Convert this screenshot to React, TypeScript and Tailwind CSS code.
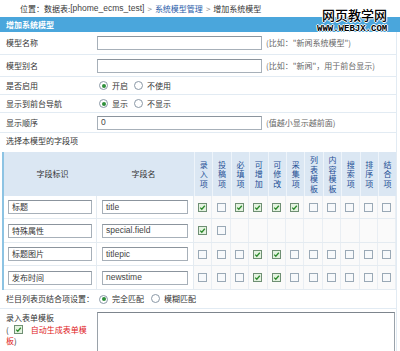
import React from "react";

const cols = ["录入项", "投稿项", "必填项", "可增加", "可修改", "采集项", "列表模板", "内容模板", "搜索项", "排序项", "结合项"];

const rows = [
  { label: "标题", name: "title", checks: [1, 0, 1, 1, 1, 1, 0, 0, 0, 0, 0], h: "h-[23px]" },
  { label: "特殊属性", name: "special.field", checks: [1, 0], h: "h-[24px]" },
  { label: "标题图片", name: "titlepic", checks: [0, 0, 0, 1, 1, 0, 0, 0, 0, 0, 0], h: "h-[23px]" },
  { label: "发布时间", name: "newstime", checks: [0, 0, 0, 1, 1, 0, 0, 0, 0, 0, 0], h: "h-[24px]" },
];

function Check({ on }: { on: boolean }) {
  return (
    <span
      className={
        "inline-flex items-center justify-center w-[9px] h-[9px] border " +
        (on ? "border-[#6f8f74] bg-[#e4f3e0]" : "border-[#9aa9b6] bg-[#f7f9fb]")
      }
    >
      {on && (
        <svg width="7" height="7" viewBox="0 0 7 7">
          <path d="M1.2 3.6 L2.8 5.2 L5.8 1.8" fill="none" stroke="#2b8a2b" strokeWidth="1.3" />
        </svg>
      )}
    </span>
  );
}

function Radio({ on }: { on: boolean }) {
  return (
    <span className="inline-flex items-center justify-center w-[9px] h-[9px] rounded-full border border-[#8a98a6] bg-white">
      {on && <span className="w-[4px] h-[4px] rounded-full bg-[#2f8f3a]" />}
    </span>
  );
}

function Input({ w, value }: { w: string; value?: string }) {
  return (
    <div
      className={
        w +
        " h-[14px] border border-[#a7b0b9] border-t-[#8b949d] bg-white flex items-center pl-[3px] font-['Liberation_Sans'] text-[8.5px] text-[#444]"
      }
    >
      {value}
    </div>
  );
}

export default function App() {
  return (
    <div className="relative w-[400px] h-[351px] overflow-hidden bg-white font-['Noto_Sans_CJK_SC',sans-serif] text-[8px] text-[#333] leading-none">
      {/* breadcrumb */}
      <div className="h-[17px] pl-[20px] flex items-center whitespace-nowrap">
        <span>位置：数据表:</span>
        <span className="font-['Liberation_Sans'] text-[8.5px] text-[#444]">[phome_ecms_test]</span>
        <span className="text-[#888] mx-[3px]">&gt;</span>
        <span className="text-[#1f5aa8]">系统模型管理</span>
        <span className="text-[#888] mx-[3px]">&gt;</span>
        <span>增加系统模型</span>
      </div>
      {/* header bar */}
      <div className="h-[15px] bg-[#4aa6dc] pl-[6px] flex items-center text-white font-bold">增加系统模型</div>

      <div className="w-[397px] border-r border-[#e2ebf3]">
        <div className="h-[23px] flex items-center border-b border-[#e2ebf3]">
          <div className="w-[97px] pl-[6px]">模型名称</div>
          <Input w="w-[165px]" />
          <span className="ml-[4px] text-[#666]">(比如：&quot;新闻系统模型&quot;)</span>
        </div>
        <div className="h-[22px] flex items-center border-b border-[#e2ebf3]">
          <div className="w-[97px] pl-[6px]">模型别名</div>
          <Input w="w-[165px]" />
          <span className="ml-[4px] text-[#666]">(比如：&quot;新闻&quot;，用于前台显示)</span>
        </div>
        <div className="h-[18px] flex items-center border-b border-[#e2ebf3]">
          <div className="w-[97px] pl-[6px]">是否启用</div>
          <div className="flex items-center ml-[2px] gap-[4px]">
            <Radio on />
            <span>开启</span>
            <span className="ml-[2px]"><Radio on={false} /></span>
            <span>不使用</span>
          </div>
        </div>
        <div className="h-[18px] flex items-center border-b border-[#e2ebf3]">
          <div className="w-[97px] pl-[6px]">显示到前台导航</div>
          <div className="flex items-center ml-[2px] gap-[4px]">
            <Radio on />
            <span>显示</span>
            <span className="ml-[2px]"><Radio on={false} /></span>
            <span>不显示</span>
          </div>
        </div>
        <div className="h-[20px] flex items-center border-b border-[#e2ebf3]">
          <div className="w-[97px] pl-[6px]">显示顺序</div>
          <Input w="w-[165px]" value="0" />
          <span className="ml-[4px] text-[#666]">(值越小显示越前面)</span>
        </div>
        <div className="h-[16px] flex items-center pl-[6px]">选择本模型的字段项</div>

        {/* field table */}
        <div className="pt-[3px] pl-[2px]">
          <div className="border-l-2 border-[#8cc3e3]">
            <div className="grid grid-cols-[93px_97px_repeat(11,18.4px)] h-[44px] bg-[#dbe7f3]">
              <div className="flex items-center justify-center pl-[4px]">字段标识</div>
              <div className="flex items-center justify-center pr-[4px]">字段名</div>
              {cols.map((c, i) => (
                <div key={i} className="flex flex-col items-center justify-center text-[#1d4f95] border-l border-[#eef4fa]">
                  {c.split("").map((ch, j) => (
                    <span key={j} className="h-[9.5px] leading-[9.5px]">{ch}</span>
                  ))}
                </div>
              ))}
            </div>
            {rows.map((r, i) => (
              <div
                key={i}
                className={"grid grid-cols-[93px_97px_repeat(11,18.4px)] border-b border-[#e4ebf1] " + r.h}
              >
                <div className="flex items-center pl-[4px] border-r border-[#e4ebf1]">
                  <div className="w-[84px] h-[14px] border border-[#a7b0b9] border-t-[#8b949d] bg-white flex items-center pl-[3px]">
                    {r.label}
                  </div>
                </div>
                <div className="flex items-center pl-[5px] border-r border-[#e4ebf1]">
                  <Input w="w-[86px]" value={r.name} />
                </div>
                {Array.from({ length: 11 }).map((_, k) => (
                  <div key={k} className="flex items-center justify-center border-r border-[#e9eef3] bg-[#fafafa]">
                    {k < r.checks.length && <Check on={r.checks[k] === 1} />}
                  </div>
                ))}
              </div>
            ))}
          </div>
        </div>

        <div className="h-[19px] flex items-center border-b border-[#e2ebf3]">
          <div className="w-[97px] pl-[6px]">栏目列表页结合项设置：</div>
          <div className="flex items-center ml-[2px] gap-[4px]">
            <Radio on />
            <span>完全匹配</span>
            <span className="ml-[3px]"><Radio on={false} /></span>
            <span>模糊匹配</span>
          </div>
        </div>
        <div className="flex pt-[3px]">
          <div className="w-[97px] pl-[6px] leading-[11px]">
            <div>录入表单模板</div>
            <div className="flex items-center mt-[1px]">
              <span>(</span>
              <span className="ml-[5px] mr-[8px]"><Check on /></span>
              <span className="text-[#e0201c]">自动生成表单模</span>
            </div>
            <div><span className="text-[#e0201c]">板</span>)</div>
          </div>
          <div className="w-[298px] h-[50px] border border-[#9aa2aa] border-t-[#7d858d] bg-white" />
        </div>
      </div>

      {/* watermark */}
      <div className="absolute left-[322px] top-[7px] text-[13px] leading-[16px] text-black font-medium [text-shadow:1px_0_0_#fff,-1px_0_0_#fff,0_1px_0_#fff,0_-1px_0_#fff]">
        网页教学网
      </div>
      <div className="absolute left-[317px] top-[26px] font-['Liberation_Mono'] font-bold text-[9px] leading-[7px] text-black [text-shadow:1px_0_0_#fff,-1px_0_0_#fff,0_1px_0_#fff,0_-1px_0_#fff]">
        WWW.WEBJX.COM
      </div>
    </div>
  );
}
